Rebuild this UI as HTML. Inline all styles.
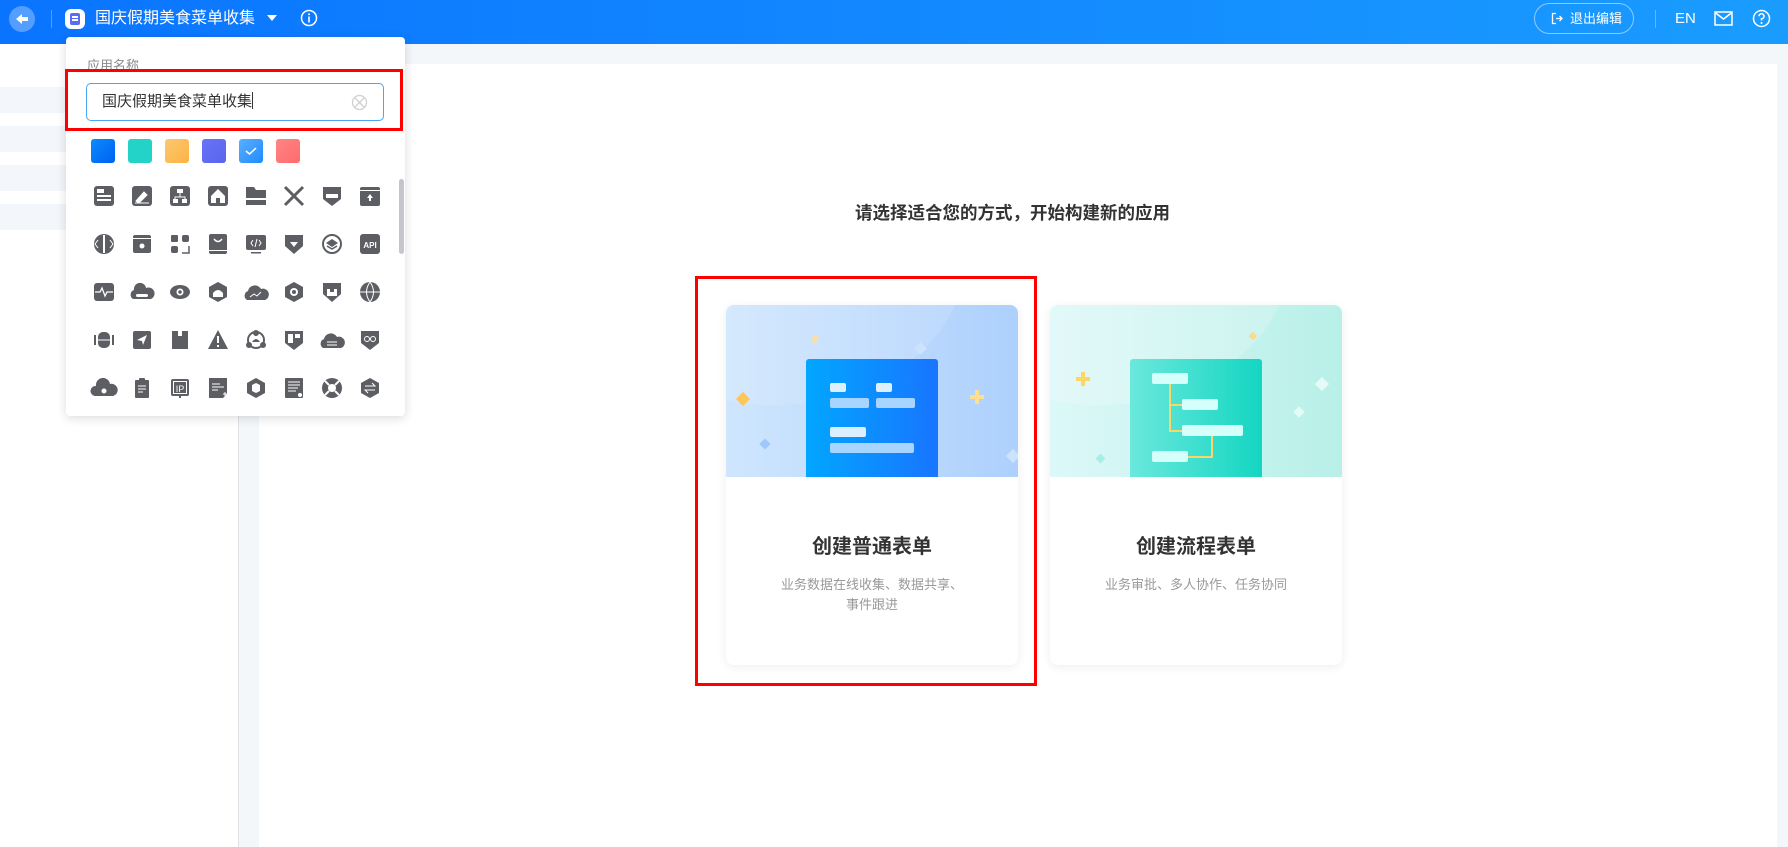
<!DOCTYPE html>
<html><head><meta charset="utf-8">
<style>
*{margin:0;padding:0;box-sizing:border-box}
body{width:1788px;height:847px;overflow:hidden;background:#fff;font-family:"Liberation Sans","Noto Sans CJK SC",sans-serif;position:relative}
.hdr{position:absolute;left:0;top:0;width:1788px;height:44px;background:linear-gradient(90deg,#0a74ff,#1a9cff)}
.abs{position:absolute}
.side{position:absolute;left:0;top:44px;width:239px;height:803px;background:#fff;border-right:1px solid #dfe3e8}
.srow{position:absolute;left:0;width:238px;height:26px;background:#f3f7fb}
.main{position:absolute;left:239px;top:44px;width:1549px;height:803px;background:#f3f7fa}
.panel{position:absolute;left:259px;top:64px;width:1518px;height:783px;background:#fff}
.pop{position:absolute;left:66px;top:37px;width:339px;height:379px;background:#fff;border-radius:4px;box-shadow:0 2px 10px rgba(0,0,0,.15)}
.sw{position:absolute;top:139px;width:24px;height:24px;border-radius:3px}
.ic{position:absolute;width:20px;height:20px}
.card{position:absolute;top:305px;width:292px;height:360px;background:#fff;border-radius:8px;box-shadow:0 2px 10px rgba(0,0,0,.07);overflow:hidden}
.ill{position:absolute;left:0;top:0;width:292px;height:172px}
.rect{position:absolute;left:80px;top:54px;width:132px;height:118px;border-radius:3px 3px 0 0}
.b{position:absolute;border-radius:2px}
.ct{position:absolute;left:0;width:292px;text-align:center;top:225px;font-size:20px;font-weight:bold;color:#333}
.cd{position:absolute;left:0;width:292px;text-align:center;top:270px;font-size:13px;color:#999;line-height:20px}
</style></head><body>
<div class="hdr"></div>
<!-- back -->
<div class="abs" style="left:9px;top:6px;width:26px;height:26px;border-radius:50%;background:rgba(255,255,255,.3)"></div>
<svg class="abs" style="left:14px;top:11px" width="16" height="16" viewBox="0 0 16 16"><path d="M2 8 L8 3 V6 H14 V10 H8 V13 Z" fill="#fff"/></svg>
<div class="abs" style="left:51px;top:10px;width:1px;height:18px;background:rgba(255,255,255,.3)"></div>
<div class="abs" style="left:65px;top:9px;width:20px;height:20px;border-radius:6px;background:#fff"></div>
<div class="abs" style="left:70px;top:13px;width:10px;height:12px;border-radius:2px;background:#5b6cf0"></div>
<div class="abs" style="left:72px;top:16px;width:6px;height:1.5px;background:#fff"></div>
<div class="abs" style="left:72px;top:19px;width:6px;height:1.5px;background:#fff"></div>
<div class="abs" style="left:95px;top:8px;font-size:16px;color:#fff;line-height:22px">国庆假期美食菜单收集</div>
<svg class="abs" style="left:267px;top:14px" width="10" height="8"><path d="M0 1 H10 L5 7Z" fill="#fff"/></svg>
<svg class="abs" style="left:300px;top:9px" width="18" height="18" viewBox="0 0 18 18"><circle cx="9" cy="9" r="7.5" fill="none" stroke="#fff" stroke-width="1.5"/><rect x="8.2" y="7.5" width="1.6" height="6" fill="#fff"/><circle cx="9" cy="5.2" r="1" fill="#fff"/></svg>
<!-- right header -->
<div class="abs" style="left:1534px;top:3px;width:100px;height:31px;border:1px solid rgba(255,255,255,.5);border-radius:16px"></div>
<svg class="abs" style="left:1551px;top:12px" width="13" height="13" viewBox="0 0 13 13"><path d="M5 1.5 H1.5 V11.5 H5" fill="none" stroke="#fff" stroke-width="1.3"/><path d="M5 6.5 H11 M8.5 4 L11 6.5 L8.5 9" fill="none" stroke="#fff" stroke-width="1.3"/></svg>
<div class="abs" style="left:1570px;top:10px;font-size:13px;color:#fff;line-height:18px">退出编辑</div>
<div class="abs" style="left:1655px;top:10px;width:1px;height:18px;background:rgba(255,255,255,.3)"></div>
<div class="abs" style="left:1675px;top:9px;font-size:15px;color:#fff;line-height:20px">EN</div>
<svg class="abs" style="left:1714px;top:11px" width="19" height="15" viewBox="0 0 19 15"><rect x="1" y="1" width="17" height="13" fill="none" stroke="#fff" stroke-width="1.5"/><path d="M1 1.5 L9.5 8 L18 1.5" fill="none" stroke="#fff" stroke-width="1.5"/></svg>
<svg class="abs" style="left:1752px;top:9px" width="19" height="19" viewBox="0 0 19 19"><circle cx="9.5" cy="9.5" r="8" fill="none" stroke="#fff" stroke-width="1.5"/><path d="M7 7.2 A2.5 2.5 0 1 1 9.5 9.7 V11.5" fill="none" stroke="#fff" stroke-width="1.5"/><circle cx="9.5" cy="14" r="1" fill="#fff"/></svg>

<div class="side">
<div class="srow" style="top:43px"></div><div class="srow" style="top:82px"></div><div class="srow" style="top:121px"></div><div class="srow" style="top:160px"></div>
</div>
<div class="main"></div>
<div class="panel"></div>

<div class="abs" style="left:0;width:1788px;text-align:center;top:202px;font-size:17px;font-weight:bold;color:#333;line-height:22px;padding-left:244px;margin-left:-244px"></div>
<div class="abs" style="left:855px;top:202px;font-size:17.5px;font-weight:bold;color:#333;line-height:22px;white-space:nowrap">请选择适合您的方式，开始构建新的应用</div>

<!-- card 1 -->
<div class="card" style="left:726px">
<div class="ill" style="background:linear-gradient(90deg,#cfe6fd,#add0fd)">
<div class="abs" style="left:-140px;top:-200px;width:380px;height:300px;border-radius:50%;background:rgba(255,255,255,.12)"></div>
<div class="abs" style="left:12px;top:89px;width:10px;height:10px;background:#fdc65a;transform:rotate(45deg)"></div>
<div class="abs" style="left:86px;top:31px;width:6px;height:6px;background:#fde0a0;transform:rotate(45deg)"></div>
<div class="abs" style="left:35px;top:135px;width:8px;height:8px;background:#9fc9fb;transform:rotate(45deg)"></div>
<div class="abs" style="left:190px;top:39px;width:9px;height:9px;background:#cde3fd;transform:rotate(45deg)"></div>
<div class="abs" style="left:282px;top:146px;width:10px;height:10px;background:#cde3fd;transform:rotate(45deg)"></div>
<div class="abs" style="left:244px;top:90px;width:14px;height:4px;background:#fde08f"></div>
<div class="abs" style="left:249px;top:85px;width:4px;height:14px;background:#fde08f"></div>
<div class="rect" style="background:linear-gradient(90deg,#02a6ff,#1875ff)">
<div class="b" style="left:24px;top:24px;width:16px;height:9px;background:#dcefff"></div>
<div class="b" style="left:70px;top:24px;width:16px;height:9px;background:#dcefff"></div>
<div class="b" style="left:24px;top:39px;width:39px;height:10px;background:#a8d5ff"></div>
<div class="b" style="left:70px;top:39px;width:39px;height:10px;background:#a8d5ff"></div>
<div class="b" style="left:24px;top:68px;width:36px;height:10px;background:#dcefff"></div>
<div class="b" style="left:24px;top:84px;width:84px;height:10px;background:#a8d5ff"></div>
</div></div>
<div class="ct">创建普通表单</div>
<div class="cd">业务数据在线收集、数据共享、<br>事件跟进</div>
</div>
<div class="abs" style="left:695px;top:276px;width:342px;height:410px;border:3px solid #f00"></div>

<!-- card 2 -->
<div class="card" style="left:1050px">
<div class="ill" style="background:linear-gradient(90deg,#dcf8f8,#b8f0e8)">
<div class="abs" style="left:-140px;top:-200px;width:380px;height:300px;border-radius:50%;background:rgba(255,255,255,.2)"></div>
<div class="abs" style="left:26px;top:72px;width:14px;height:4px;background:#fdd66a"></div>
<div class="abs" style="left:31px;top:67px;width:4px;height:14px;background:#fdd66a"></div>
<div class="abs" style="left:200px;top:28px;width:6px;height:6px;background:#fdd98a;transform:rotate(45deg)"></div>
<div class="abs" style="left:267px;top:74px;width:10px;height:10px;background:#e4fbf8;transform:rotate(45deg)"></div>
<div class="abs" style="left:245px;top:103px;width:8px;height:8px;background:#e4fbf8;transform:rotate(45deg)"></div>
<div class="abs" style="left:47px;top:150px;width:7px;height:7px;background:#a8ede6;transform:rotate(45deg)"></div>
<div class="rect" style="background:linear-gradient(90deg,#6ae8dc,#14d6c2)">
<div class="abs" style="left:39px;top:25px;width:2px;height:48px;background:#fdd66a"></div>
<div class="abs" style="left:39px;top:45px;width:13px;height:2px;background:#fdd66a"></div>
<div class="abs" style="left:39px;top:71px;width:13px;height:2px;background:#fdd66a"></div>
<div class="abs" style="left:81px;top:76px;width:2px;height:23px;background:#fdd66a"></div>
<div class="abs" style="left:58px;top:97px;width:25px;height:2px;background:#fdd66a"></div>
<div class="b" style="left:22px;top:14px;width:36px;height:11px;background:#d4fffa"></div>
<div class="b" style="left:52px;top:40px;width:36px;height:11px;background:#d4fffa"></div>
<div class="b" style="left:52px;top:66px;width:61px;height:11px;background:#d4fffa"></div>
<div class="b" style="left:22px;top:92px;width:36px;height:11px;background:#d4fffa"></div>
</div></div>
<div class="ct">创建流程表单</div>
<div class="cd">业务审批、多人协作、任务协同</div>
</div>

<!-- popup -->
<div class="pop"></div>
<div class="abs" style="left:87px;top:58px;font-size:13px;color:#888;line-height:16px">应用名称</div>
<div class="abs" style="left:86px;top:83px;width:298px;height:38px;border:1px solid #4aa6f0;border-radius:5px;background:#fff"></div>
<div class="abs" style="left:102px;top:92px;font-size:15px;color:#333;line-height:20px">国庆假期美食菜单收集<span style="display:inline-block;width:1px;height:17px;background:#333;vertical-align:-3px"></span></div>
<svg class="abs" style="left:351px;top:94px" width="17" height="17" viewBox="0 0 17 17"><circle cx="8.5" cy="8.5" r="7" fill="none" stroke="#d0d0d0" stroke-width="1.3"/><path d="M4 4 L13 13 M13 4 L4 13" stroke="#d0d0d0" stroke-width="1.3"/></svg>
<div class="abs" style="left:65px;top:69px;width:338px;height:62px;border:3px solid #f00"></div>

<div class="sw" style="left:91px;background:linear-gradient(135deg,#0a8cff,#0060f0)"></div>
<div class="sw" style="left:128px;background:#24d3c8"></div>
<div class="sw" style="left:165px;background:linear-gradient(135deg,#fdc86e,#fbb345)"></div>
<div class="sw" style="left:202px;background:linear-gradient(135deg,#6a73f7,#5865ef)"></div>
<div class="sw" style="left:239px;background:linear-gradient(135deg,#5aaeff,#1f8bff)"><svg width="24" height="24"><path d="M7 12 L10.5 15 L17 9" fill="none" stroke="#fff" stroke-width="1.5"/></svg></div>
<div class="sw" style="left:276px;background:linear-gradient(135deg,#ff8585,#ff6b6b)"></div>

<div class="abs" style="left:399px;top:179px;width:5px;height:75px;border-radius:3px;background:#c4c6cb"></div>

<svg class="abs" style="left:0;top:0" width="410" height="420" viewBox="0 0 410 420" fill="#5c5e63">
<!-- row1 y 186-206 -->
<rect x="94" y="186" width="20" height="20" rx="3"/><rect x="97" y="189" width="7" height="4" fill="#fff"/><rect x="97" y="195" width="14" height="2" fill="#fff"/><rect x="97" y="199" width="14" height="2" fill="#fff"/>
<rect x="132" y="186" width="20" height="20" rx="3"/><path d="M136 201 L144 192 L147 195 L139 203Z M135 203 H149" stroke="#fff" fill="#fff" stroke-width="1"/>
<rect x="170" y="186" width="20" height="20" rx="3"/><rect x="177" y="189" width="6" height="4" fill="#fff"/><rect x="173" y="199" width="5" height="4" fill="#fff"/><rect x="182" y="199" width="5" height="4" fill="#fff"/><path d="M180 193 V197 M175 199 V197 H185 V199" stroke="#fff" fill="none"/>
<rect x="208" y="186" width="20" height="20" rx="3"/><path d="M211 196 L218 189 L225 196 V203 H211Z" fill="#fff"/><rect x="216" y="198" width="4" height="5"/>
<path d="M246 187 H254 L256 190 H266 V205 H246Z"/><rect x="246" y="198" width="20" height="2" fill="#fff"/>
<path d="M285 187 L303 205 M303 187 L285 205" stroke="#5c5e63" stroke-width="3"/>
<path d="M323 187 H341 V199 L332 206 L323 199Z"/><rect x="326" y="194" width="12" height="4" fill="#fff"/>
<rect x="360" y="187" width="20" height="19" rx="2"/><rect x="360" y="190" width="20" height="1" fill="#fff"/><path d="M370 194 L367 198 H369 V201 H371 V198 H373Z" fill="#fff"/>
<!-- row2 y234-254 -->
<circle cx="104" cy="244" r="10"/><rect x="103" y="235" width="2" height="18" fill="#fff"/><path d="M98 240 L95 244 L98 248 M110 240 L113 244 L110 248" stroke="#fff" fill="none"/>
<rect x="133" y="235" width="18" height="18" rx="2"/><rect x="133" y="238" width="18" height="1" fill="#fff"/><circle cx="142" cy="246" r="2.5" fill="#fff"/>
<rect x="171" y="235" width="7" height="7" rx="1"/><rect x="182" y="235" width="7" height="7" rx="2"/><rect x="171" y="246" width="7" height="7" rx="2"/><path d="M182 253 H189 V246" stroke="#5c5e63" fill="none" stroke-width="1.5"/>
<rect x="209" y="234" width="18" height="20" rx="2"/><path d="M214 239 Q218 244 222 239" stroke="#fff" fill="none" stroke-width="1.5"/><rect x="209" y="250" width="18" height="1" fill="#fff"/>
<rect x="246" y="235" width="20" height="15" rx="2"/><rect x="251" y="252" width="10" height="1.5"/><path d="M253 240 L251 243 L253 246 M259 240 L261 243 L259 246 M257 239 L255 247" stroke="#fff" fill="none"/>
<path d="M285 235 H303 V246 L294 254 L285 246Z"/><path d="M290 242 H298 L294 247Z" fill="#fff"/>
<circle cx="332" cy="244" r="9" fill="none" stroke="#5c5e63" stroke-width="2"/><path d="M326 243 L332 239 L338 243 L332 247Z"/><path d="M327 246 L332 249 L337 246" stroke="#5c5e63" fill="none" stroke-width="1.5"/>
<rect x="360" y="234" width="20" height="20" rx="3"/><text x="370" y="248" font-size="8" font-family="Liberation Sans" font-weight="bold" fill="#fff" text-anchor="middle">API</text>
<!-- row3 y282-302 -->
<rect x="94" y="283" width="20" height="18" rx="3"/><path d="M95 292 H100 L102 288 L105 296 L107 292 H113" stroke="#fff" fill="none" stroke-width="1.3"/>
<path d="M133 299 A5 5 0 0 1 134 290 A6 6 0 0 1 146 288 A5 5 0 0 1 151 299Z"/><rect x="136" y="294" width="12" height="3" rx="1.5" fill="#fff"/>
<ellipse cx="180" cy="292" rx="10" ry="7"/><circle cx="180" cy="292" r="3.5" fill="#fff"/><circle cx="180" cy="292" r="1.8"/>
<path d="M218 282 L227 287 V297 L218 302 L209 297 V287Z"/><path d="M213 293 Q218 287 223 293 V297 H213Z" fill="#fff"/>
<path d="M247 300 A5 5 0 0 1 248 291 A7 7 0 0 1 261 289 A5 5 0 0 1 265 300Z"/><path d="M250 297 L254 294 L257 296 L261 292" stroke="#fff" fill="none"/>
<path d="M294 282 L303 287 V297 L294 302 L285 297 V287Z"/><circle cx="294" cy="292" r="4" fill="#fff"/><circle cx="294" cy="292" r="2"/>
<path d="M323 283 H341 V294 L332 302 L323 294Z"/><path d="M327 289 H337 V296 H327Z" fill="#fff"/><rect x="330" y="289" width="4" height="3"/>
<circle cx="370" cy="292" r="10"/><path d="M360 292 H380 M370 282 Q363 292 370 302 M370 282 Q377 292 370 302" stroke="#fff" fill="none"/>
<!-- row4 y330-350 -->
<rect x="98" y="332" width="12" height="16" rx="5"/><rect x="94" y="335" width="2" height="10"/><rect x="112" y="335" width="2" height="10"/><path d="M96 340 H112" stroke="#fff"/>
<rect x="133" y="331" width="18" height="18" rx="2"/><path d="M137 340 L147 335 L143 345 L142 341Z" fill="#fff"/>
<path d="M172 331 H188 V349 H172Z"/><rect x="178" y="331" width="4" height="5" fill="#fff"/>
<path d="M218 330 L228 349 H208Z"/><rect x="217" y="336" width="2" height="7" fill="#fff"/><rect x="217" y="345" width="2" height="2" fill="#fff"/>
<circle cx="256" cy="340" r="8" fill="none" stroke="#5c5e63" stroke-width="2"/><circle cx="256" cy="333" r="3"/><circle cx="249" cy="345" r="3"/><circle cx="263" cy="345" r="3"/><path d="M252 342 Q256 336 260 342Z"/>
<path d="M285 331 H303 V343 L294 350 L285 343Z"/><rect x="288" y="334" width="5" height="9" fill="#fff"/><rect x="295" y="334" width="5" height="4" fill="#fff"/>
<path d="M323 348 A5 5 0 0 1 324 339 A7 7 0 0 1 337 337 A5 5 0 0 1 341 348Z"/><path d="M327 342 H337 M327 345 H337" stroke="#fff"/>
<path d="M361 331 H379 V343 L370 350 L361 343Z"/><circle cx="367" cy="339" r="2.5" fill="none" stroke="#fff"/><circle cx="373" cy="339" r="2.5" fill="none" stroke="#fff"/>
<!-- row5 y378-398 -->
<path d="M95 396 A5 5 0 0 1 96 386 A7 7 0 0 1 110 384 A6 6 0 0 1 113 396Z"/><circle cx="104" cy="391" r="2.5" fill="#fff"/>
<rect x="135" y="380" width="14" height="18" rx="1"/><rect x="139" y="378" width="6" height="4" rx="1"/><path d="M138 386 H146 M138 389 H146 M138 392 H143" stroke="#fff"/>
<rect x="171" y="379" width="18" height="17" rx="2"/><rect x="173" y="381" width="14" height="13" fill="#fff"/><rect x="174" y="382" width="12" height="11"/><text x="180" y="392" font-size="9" font-family="Liberation Sans" fill="#fff" text-anchor="middle">IP</text><rect x="179" y="396" width="2" height="2"/>
<path d="M209 378 H227 V394 L223 398 H209Z"/><path d="M212 384 H220 M212 387 H224 M212 390 H218" stroke="#fff"/><path d="M223 394 H227 M225 392 V396" stroke="#fff"/>
<path d="M256 378 L265 383 V393 L256 398 L247 393 V383Z"/><path d="M252 385 L256 383 L260 385 V391 L256 393 L252 391Z" fill="#fff"/>
<rect x="285" y="378" width="18" height="20" rx="1"/><path d="M288 382 H300 M288 385 H300 M288 388 H298 M288 391 H296" stroke="#fff"/><circle cx="300" cy="395" r="2" fill="#fff"/>
<circle cx="332" cy="388" r="10"/><circle cx="332" cy="388" r="4" fill="#fff"/><path d="M325 381 L329 385 M339 381 L335 385 M325 395 L329 391 M339 395 L335 391" stroke="#fff" stroke-width="2"/>
<path d="M370 378 L379 383 V393 L370 398 L361 393 V383Z"/><path d="M365 386 H375 L372 383 M375 390 H365 L368 393" stroke="#fff" fill="none"/>
</svg>
</body></html>
